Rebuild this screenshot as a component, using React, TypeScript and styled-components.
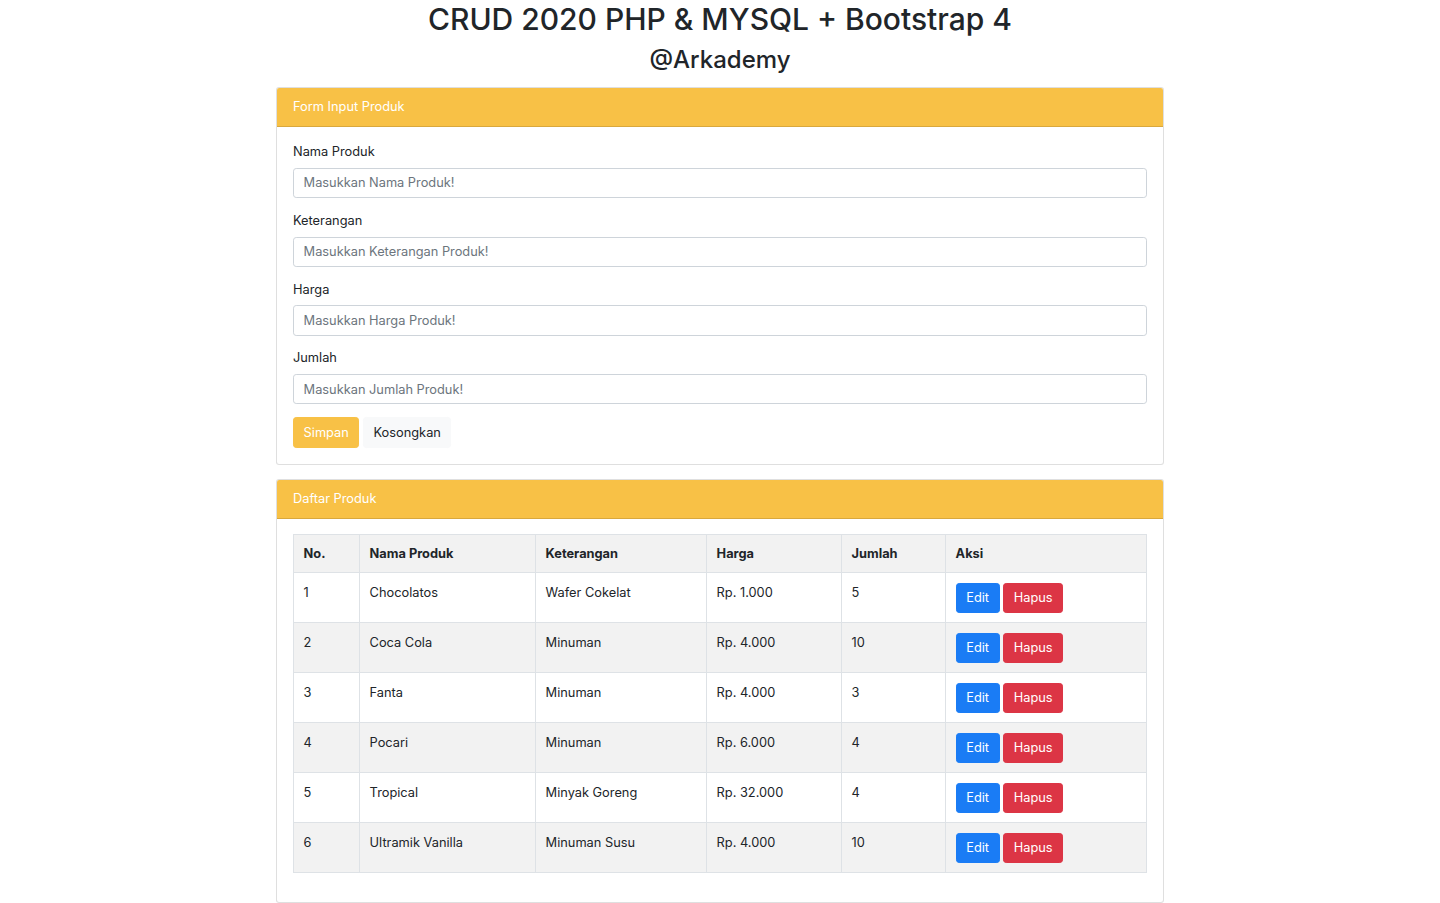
import React from "react";
import styled, { createGlobalStyle, css } from "styled-components";

const GlobalStyle = createGlobalStyle`
  html, body {
    margin: 0;
    padding: 0;
    background: #fff;
  }
  body {
    font-family: Inter, "Noto Sans", "Liberation Sans", sans-serif;
    font-size: 12.8px;
    line-height: 1.5;
    color: #212529;
  }
  * {
    box-sizing: border-box;
  }
`;

const produk = [
  { nama: "Chocolatos", ket: "Wafer Cokelat", harga: "Rp. 1.000", jumlah: "5" },
  { nama: "Coca Cola", ket: "Minuman", harga: "Rp. 4.000", jumlah: "10" },
  { nama: "Fanta", ket: "Minuman", harga: "Rp. 4.000", jumlah: "3" },
  { nama: "Pocari", ket: "Minuman", harga: "Rp. 6.000", jumlah: "4" },
  { nama: "Tropical", ket: "Minyak Goreng", harga: "Rp. 32.000", jumlah: "4" },
  { nama: "Ultramik Vanilla", ket: "Minuman Susu", harga: "Rp. 4.000", jumlah: "10" },
];

const fields = [
  { label: "Nama Produk", placeholder: "Masukkan Nama Produk!" },
  { label: "Keterangan", placeholder: "Masukkan Keterangan Produk!" },
  { label: "Harga", placeholder: "Masukkan Harga Produk!" },
  { label: "Jumlah", placeholder: "Masukkan Jumlah Produk!" },
];

const Container = styled.div`
  width: 912px;
  margin: 0 auto;
  padding: 0 12px;
`;

const Title = styled.h1`
  margin: 0 0 6.4px;
  font-size: 30px;
  font-weight: 500;
  line-height: 39px;
  text-align: center;
`;

const SubTitle = styled.h2`
  margin: 0 0 12.4px;
  font-size: 24px;
  font-weight: 500;
  line-height: 29px;
  text-align: center;
`;

const Card = styled.div`
  border: 1px solid rgba(0, 0, 0, 0.125);
  border-radius: 3.2px;
  background: #fff;
  overflow: hidden;
  & + & {
    margin-top: 14px;
  }
`;

const CardHeader = styled.div`
  padding: 9.6px 16px;
  background: #f8c146;
  color: #fff;
  border-bottom: 1px solid rgba(0, 0, 0, 0.125);
`;

const CardBody = styled.div`
  padding: 15px 16px 16px;
`;

const FormGroup = styled.div`
  margin-bottom: 12.8px;
`;

const Label = styled.label`
  display: block;
  margin-bottom: 6.4px;
`;

const Input = styled.input`
  display: block;
  width: 100%;
  height: 30.4px;
  padding: 4.6px 9.6px;
  font-family: inherit;
  font-size: 12.8px;
  line-height: 1.5;
  color: #495057;
  border: 1px solid #ced4da;
  border-radius: 3.2px;
  background: #fff;
  &::placeholder {
    color: #6c757d;
  }
`;

const Actions = styled.div`
  display: flex;
  gap: 3.5px;
`;

const variants = {
  warning: css`
    background: #f8c146;
    border-color: #f8c146;
    color: #fff;
  `,
  light: css`
    background: #f8f9fa;
    border-color: #f8f9fa;
    color: #212529;
  `,
  primary: css`
    background: #1a7cf5;
    border-color: #1a7cf5;
    color: #fff;
  `,
  danger: css`
    background: #dc3545;
    border-color: #dc3545;
    color: #fff;
  `,
};

const Button = styled.button<{ $variant: keyof typeof variants }>`
  height: 30.4px;
  padding: 4.6px 9.6px;
  font-family: inherit;
  font-size: 12.8px;
  line-height: 1.5;
  border: 1px solid transparent;
  border-radius: 3.2px;
  cursor: pointer;
  ${(p) => variants[p.$variant]}
`;

const Table = styled.table`
  width: 100%;
  border-collapse: collapse;
  margin-bottom: 12.8px;
  border: 1px solid #dee2e6;
`;

const Th = styled.th<{ $w?: number }>`
  padding: 9px 9.6px;
  text-align: left;
  vertical-align: bottom;
  font-weight: 700;
  border: 1px solid #dee2e6;
  ${(p) => p.$w && `width: ${p.$w}px;`}
`;

const HeadRow = styled.tr`
  background: #f2f2f2;
`;

const Row = styled.tr<{ $striped: boolean }>`
  background: ${(p) => (p.$striped ? "#f2f2f2" : "#fff")};
`;

const Td = styled.td`
  padding: 9.6px 9.6px 9px;
  vertical-align: top;
  border: 1px solid #dee2e6;
`;

export default function App() {
  return (
    <>
      <GlobalStyle />
      <Container>
        <Title>CRUD 2020 PHP &amp; MYSQL + Bootstrap 4</Title>
        <SubTitle>@Arkademy</SubTitle>

        <Card>
          <CardHeader>Form Input Produk</CardHeader>
          <CardBody>
            {fields.map((f) => (
              <FormGroup key={f.label}>
                <Label>{f.label}</Label>
                <Input type="text" placeholder={f.placeholder} />
              </FormGroup>
            ))}
            <Actions>
              <Button $variant="warning">Simpan</Button>
              <Button $variant="light">Kosongkan</Button>
            </Actions>
          </CardBody>
        </Card>

        <Card>
          <CardHeader>Daftar Produk</CardHeader>
          <CardBody>
            <Table>
              <thead>
                <HeadRow>
                  <Th $w={66}>No.</Th>
                  <Th $w={176}>Nama Produk</Th>
                  <Th $w={171}>Keterangan</Th>
                  <Th $w={135}>Harga</Th>
                  <Th $w={104}>Jumlah</Th>
                  <Th>Aksi</Th>
                </HeadRow>
              </thead>
              <tbody>
                {produk.map((p, i) => (
                  <Row key={i} $striped={i % 2 === 1}>
                    <Td>{i + 1}</Td>
                    <Td>{p.nama}</Td>
                    <Td>{p.ket}</Td>
                    <Td>{p.harga}</Td>
                    <Td>{p.jumlah}</Td>
                    <Td>
                      <Actions>
                        <Button $variant="primary">Edit</Button>
                        <Button $variant="danger">Hapus</Button>
                      </Actions>
                    </Td>
                  </Row>
                ))}
              </tbody>
            </Table>
          </CardBody>
        </Card>
      </Container>
    </>
  );
}
